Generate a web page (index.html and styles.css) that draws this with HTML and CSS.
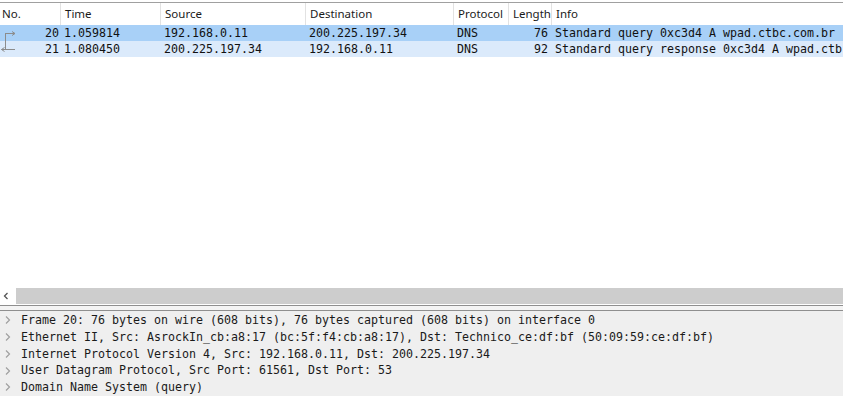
FILE: index.html
```html
<!DOCTYPE html>
<html>
<head>
<meta charset="utf-8">
<link rel="stylesheet" href="styles.css">
</head>
<body>
<div class="app">
  <div class="packet-list">
    <div class="row header">
      <div class="c c-no">No.</div>
      <div class="c c-time">Time</div>
      <div class="c c-src">Source</div>
      <div class="c c-dst">Destination</div>
      <div class="c c-proto">Protocol</div>
      <div class="c c-len">Length</div>
      <div class="c c-info">Info</div>
    </div>
    <div class="row data selected">
      <div class="c c-no num">
        <svg class="rel" width="18" height="16" viewBox="0 0 18 16"><path d="M5.5 8.5 H15 M5.5 8 V16" stroke="#8c8c8c" stroke-width="1" fill="none"/><path d="M12 6.5 L15 8.5 L12 10.5" stroke="#8c8c8c" fill="none"/></svg>
        20
      </div>
      <div class="c c-time">1.059814</div>
      <div class="c c-src">192.168.0.11</div>
      <div class="c c-dst">200.225.197.34</div>
      <div class="c c-proto">DNS</div>
      <div class="c c-len num">76</div>
      <div class="c c-info">Standard query 0xc3d4 A wpad.ctbc.com.br</div>
    </div>
    <div class="row data udp">
      <div class="c c-no num">
        <svg class="rel" width="18" height="16" viewBox="0 0 18 16"><path d="M5.5 0 V8.5 M1.5 8.5 H15" stroke="#8c8c8c" stroke-width="1" fill="none"/><path d="M4.5 6.5 L1.5 8.5 L4.5 10.5" stroke="#8c8c8c" fill="none"/></svg>
        21
      </div>
      <div class="c c-time">1.080450</div>
      <div class="c c-src">200.225.197.34</div>
      <div class="c c-dst">192.168.0.11</div>
      <div class="c c-proto">DNS</div>
      <div class="c c-len num">92</div>
      <div class="c c-info">Standard query response 0xc3d4 A wpad.ctb</div>
    </div>
    <div class="empty"></div>
    <div class="hscroll">
      <div class="hs-btn"><svg width="16" height="16" viewBox="0 0 16 16"><path d="M7.5 5 L4.5 8 L7.5 11" stroke="#555" stroke-width="1.3" fill="none"/></svg></div>
      <div class="hs-track"></div>
    </div>
  </div>
  <div class="splitter"></div>
  <div class="tree">
    <div class="t-row"><span class="exp"><svg width="8" height="10" viewBox="0 0 8 10"><path d="M2 1.5 L5.5 5 L2 8.5" stroke="#a0a0a0" stroke-width="1.2" fill="none"/></svg></span><span class="t-text">Frame 20: 76 bytes on wire (608 bits), 76 bytes captured (608 bits) on interface 0</span></div>
    <div class="t-row"><span class="exp"><svg width="8" height="10" viewBox="0 0 8 10"><path d="M2 1.5 L5.5 5 L2 8.5" stroke="#a0a0a0" stroke-width="1.2" fill="none"/></svg></span><span class="t-text">Ethernet II, Src: AsrockIn_cb:a8:17 (bc:5f:f4:cb:a8:17), Dst: Technico_ce:df:bf (50:09:59:ce:df:bf)</span></div>
    <div class="t-row"><span class="exp"><svg width="8" height="10" viewBox="0 0 8 10"><path d="M2 1.5 L5.5 5 L2 8.5" stroke="#a0a0a0" stroke-width="1.2" fill="none"/></svg></span><span class="t-text">Internet Protocol Version 4, Src: 192.168.0.11, Dst: 200.225.197.34</span></div>
    <div class="t-row"><span class="exp"><svg width="8" height="10" viewBox="0 0 8 10"><path d="M2 1.5 L5.5 5 L2 8.5" stroke="#a0a0a0" stroke-width="1.2" fill="none"/></svg></span><span class="t-text">User Datagram Protocol, Src Port: 61561, Dst Port: 53</span></div>
    <div class="t-row"><span class="exp"><svg width="8" height="10" viewBox="0 0 8 10"><path d="M2 1.5 L5.5 5 L2 8.5" stroke="#a0a0a0" stroke-width="1.2" fill="none"/></svg></span><span class="t-text">Domain Name System (query)</span></div>
  </div>
</div>
</body>
</html>
```
FILE: styles.css
```css
html, body {
  margin: 0;
  padding: 0;
  background: #ffffff;
  width: 843px;
  height: 403px;
  overflow: hidden;
}
.app {
  display: flex;
  flex-direction: column;
  width: 843px;
  height: 403px;
  padding-top: 2px;
  box-sizing: border-box;
}
.packet-list {
  display: flex;
  flex-direction: column;
  border-top: 1px solid #a0a0a0;
}
.row {
  display: grid;
  grid-template-columns: 60px 100px 145px 148px 55px 43px 1fr;
  white-space: nowrap;
  overflow: hidden;
}
.header {
  height: 22px;
  font-family: "Noto Sans", "DejaVu Sans", sans-serif;
  font-size: 11.5px;
  color: #1a1a1a;
  background: #ffffff;
}
.header .c {
  border-left: 1px solid #e2e2e2;
  line-height: 22px;
  padding-left: 4px;
}
.header .c-no {
  border-left: none;
  padding-left: 2px;
}
.c {
  overflow: hidden;
  box-sizing: border-box;
}
.data {
  height: 16px;
  line-height: 16px;
  font-family: "DejaVu Sans Mono", "Liberation Mono", monospace;
  font-size: 11.63px;
  color: #111111;
}
.data .c {
  padding-left: 4px;
}
.data .num {
  text-align: right;
  padding-right: 3px;
}
.data .c-no {
  position: relative;
  padding-right: 1px;
}
.rel {
  position: absolute;
  left: 0;
  top: 0;
}
.selected {
  background: #a8d0f7;
}
.udp {
  background: #dbeafb;
}
.empty {
  height: 231px;
}
.hscroll {
  display: flex;
  height: 16px;
}
.hs-btn {
  width: 16px;
  height: 16px;
  background: #ffffff;
}
.hs-btn svg {
  display: block;
}
.hs-track {
  flex: 1;
  background: #cdcdcd;
}
.splitter {
  height: 4px;
  margin-top: 1px;
  border-top: 1px solid #8f8f8f;
  border-bottom: 1px solid #8f8f8f;
  background: #f4f4f4;
}
.tree {
  background: #efefef;
  height: 84px;
  font-family: "DejaVu Sans Mono", "Liberation Mono", monospace;
  font-size: 11.63px;
  color: #1a1a1a;
  padding-top: 1px;
}
.t-row {
  display: flex;
  align-items: center;
  height: 16.75px;
  line-height: 16.75px;
  white-space: nowrap;
}
.exp {
  display: flex;
  align-items: center;
  width: 21px;
  padding-left: 4px;
  box-sizing: border-box;
}
.exp svg {
  display: block;
}
```
